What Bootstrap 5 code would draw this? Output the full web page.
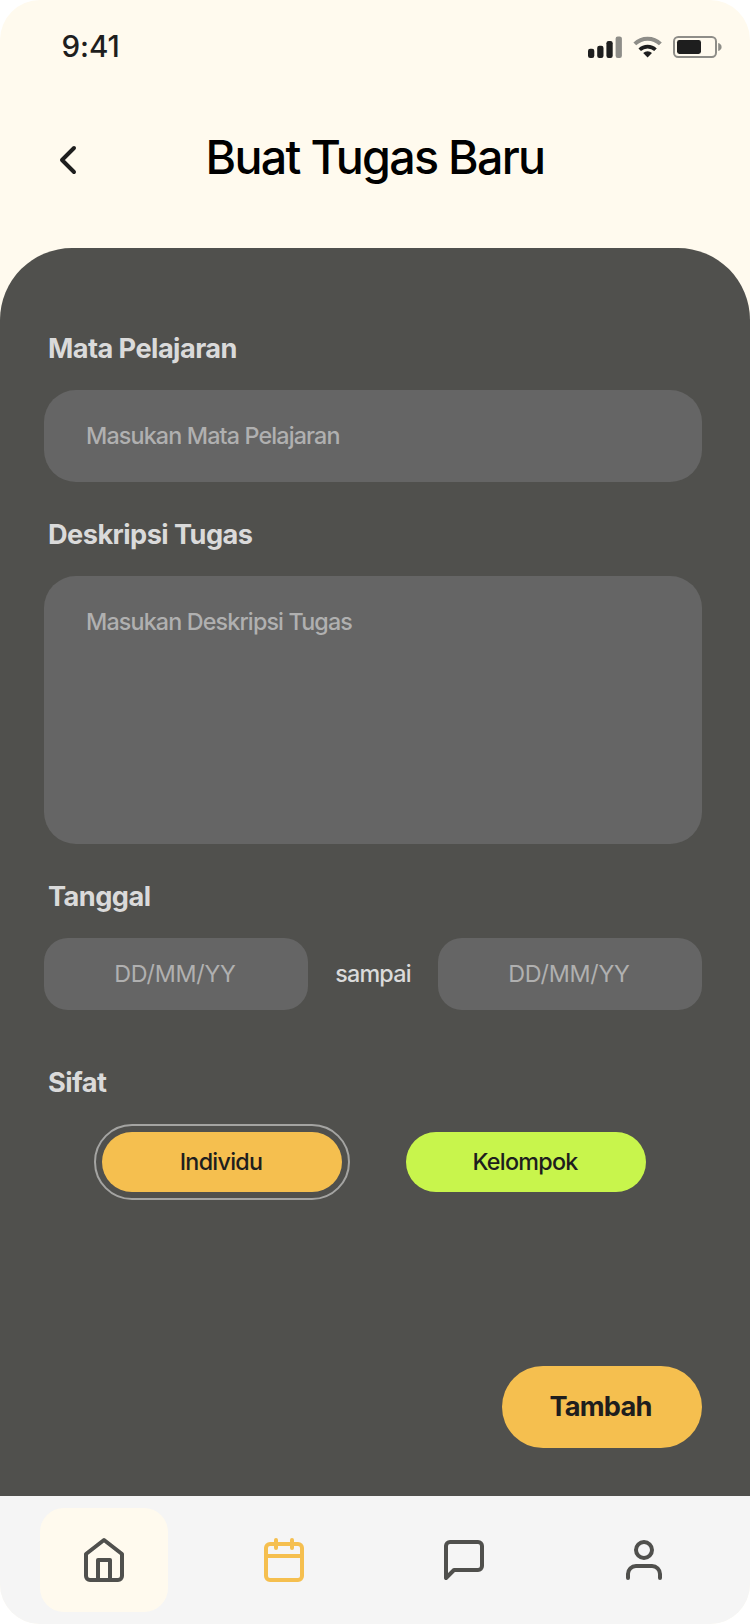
<!DOCTYPE html>
<html lang="id">
<head>
<meta charset="utf-8">
<meta name="viewport" content="width=device-width, initial-scale=1">
<title>Buat Tugas Baru</title>
<link href="https://cdn.jsdelivr.net/npm/bootstrap@5.3.0/dist/css/bootstrap.min.css" rel="stylesheet">
<style>
  :root { --cream: #fffaee; --slate: #50504d; --field: #656565; --amber: #f5bf4f; --lime: #c8f54c; --ink: #1e1e1e; --soft: #dadada; --hint: #b0b0b0; }
  body { margin: 0; background: #fff; font-family: Inter, "Liberation Sans", sans-serif; }
  .phone { width: 750px; height: 1624px; border-radius: 40px; background: var(--cream); }
  .status-bar { height: 92px; padding: 0 29px 0 61.5px; color: var(--ink); }
  .clock { font-size: 29.6px; font-weight: 500; line-height: 92px; letter-spacing: -.1px; }
  .top-bar { height: 156px; padding: 44px 44px 64px; }
  .title-text { font-size: 46.6px; font-weight: 500; line-height: 43px; letter-spacing: -1.7px; color: #000; }
  .side-slot { width: 48px; height: 48px; color: var(--ink); }
  .sheet { background: var(--slate); border-radius: 72px 72px 0 0; padding: 84px 48px 48px 44px; }
  .field-label { font-size: 27.2px; font-weight: 700; line-height: 34px; letter-spacing: -.56px; color: var(--soft); margin: 0 0 24px 4px; }
  .field { background: var(--field); border: 0; border-radius: 32px; color: var(--soft); font-size: 23.3px; font-weight: 500; line-height: 28px; letter-spacing: -.85px; padding: 32px 42px; resize: none; }
  .field:focus { background: var(--field); color: var(--soft); }
  .field::placeholder { color: var(--hint); opacity: 1; }
  .field-line { height: 92px; margin-bottom: 36px; padding-top: 31px; padding-bottom: 33px; }
  .field-area { height: 268px; margin-bottom: 36px; }
  .field-date { width: 264px; height: 72px; border-radius: 24px; padding: 21px 2px 23px 0; font-weight: 400; letter-spacing: -.22px; }
  .date-row { margin-bottom: 56px; }
  .between { font-size: 23.3px; font-weight: 500; letter-spacing: -.75px; color: var(--soft); }
  .kinds { padding: 0 48px 0 50px; }
  .ring { border: 2px solid transparent; border-radius: 38px; padding: 6px; }
  .ring.chosen { border-color: #a4a4a2; }
  .pill { width: 240px; height: 60px; padding: 0 2px 0 0; border: 0; border-radius: 30px; font-size: 23.3px; font-weight: 500; letter-spacing: -.72px; color: var(--ink); }
  .pill-amber { background: var(--amber); }
  .pill-lime { background: var(--lime); }
  .submit { width: 200px; height: 82px; padding: 0 3px 0 0; border: 0; border-radius: 41px; background: var(--amber); color: var(--ink); font-size: 27.2px; font-weight: 700; letter-spacing: -.8px; }
  .tab-bar { height: 128px; padding: 12px 42px 12px 40px; background: #f5f5f5; }
  .tab { width: 128px; height: 104px; border-radius: 24px; color: var(--slate); }
  .tab-on { background: var(--cream); }
  .tab-amber { color: var(--amber); }
  .line-icon { width: 48px; height: 48px; fill: none; stroke: currentColor; stroke-width: 2; stroke-linecap: round; stroke-linejoin: round; display: block; }
</style>
</head>
<body>
<div class="phone d-flex flex-column overflow-hidden">
  <div class="status-bar d-flex justify-content-between">
    <span class="clock">9:41</span>
    <svg width="134" height="92" viewBox="587 0 134 92" aria-hidden="true" overflow="visible">
      <g fill="#1e1e1e">
        <rect x="588" y="48.7" width="6.3" height="9.3" rx="2.2"/>
        <rect x="597.2" y="45.7" width="6.3" height="12.3" rx="2.2"/>
        <rect x="606.4" y="41" width="6.3" height="17" rx="2.2"/>
        <rect x="615.6" y="36.5" width="6.3" height="21.5" rx="2.2" fill="#8e8d88"/>
      </g>
      <path d="M634.8 43.9a18.2 18.2 0 0 1 25.6 0" fill="none" stroke="#8e8d88" stroke-width="4"/>
      <path d="M639.7 49.8a11.3 11.3 0 0 1 15.8 0" fill="none" stroke="#1e1e1e" stroke-width="3.6"/>
      <path d="M647.6 57.6l-4.400-4.600a6.600 6.600 0 0 1 8.800 0z" fill="#1e1e1e"/>
      <rect x="674" y="37" width="42" height="20" rx="4.2" fill="none" stroke="#8e8d88" stroke-width="2"/>
      <rect x="677" y="40" width="24" height="14" rx="2.4" fill="#1e1e1e"/>
      <path d="M718.2 43c2 .6 3.400 2 3.400 4s-1.400 3.400-3.400 4z" fill="#8e8d88"/>
    </svg>
  </div>
  <header class="top-bar d-flex justify-content-between">
    <a href="#" class="side-slot" aria-label="Kembali"><svg class="line-icon" viewBox="0 0 24 24"><path d="M15 18l-6-6 6-6"/></svg></a>
    <h1 class="title-text m-0">Buat Tugas Baru</h1>
    <span class="side-slot"></span>
  </header>
  <form class="sheet flex-grow-1 d-flex flex-column">
    <label class="field-label" for="subject">Mata Pelajaran</label>
    <input id="subject" class="form-control field field-line" placeholder="Masukan Mata Pelajaran">
    <label class="field-label" for="detail">Deskripsi Tugas</label>
    <textarea id="detail" class="form-control field field-area" placeholder="Masukan Deskripsi Tugas"></textarea>
    <label class="field-label" for="from">Tanggal</label>
    <div class="date-row d-flex align-items-center justify-content-between">
      <input id="from" class="form-control field field-date text-center" placeholder="DD/MM/YY">
      <span class="between">sampai</span>
      <input class="form-control field field-date text-center" placeholder="DD/MM/YY">
    </div>
    <div class="field-label">Sifat</div>
    <div class="kinds d-flex justify-content-between">
      <div class="ring chosen"><button type="button" class="btn pill pill-amber d-block">Individu</button></div>
      <div class="ring"><button type="button" class="btn pill pill-lime d-block">Kelompok</button></div>
    </div>
    <button type="button" class="btn submit align-self-end mt-auto">Tambah</button>
  </form>
  <nav class="tab-bar d-flex justify-content-between">
    <a href="#" class="tab tab-on d-flex align-items-center justify-content-center" aria-label="Beranda"><svg class="line-icon" viewBox="0 0 24 24"><path d="M3 9l9-7 9 7v11a2 2 0 0 1-2 2H5a2 2 0 0 1-2-2z"/><path d="M9 22V12h6v10"/></svg></a>
    <a href="#" class="tab tab-amber d-flex align-items-center justify-content-center" aria-label="Kalender"><svg class="line-icon" viewBox="0 0 24 24"><rect x="3" y="4" width="18" height="18" rx="2"/><path d="M16 2v4M8 2v4M3 10h18"/></svg></a>
    <a href="#" class="tab d-flex align-items-center justify-content-center" aria-label="Pesan"><svg class="line-icon" viewBox="0 0 24 24"><path d="M21 15a2 2 0 0 1-2 2H7l-4 4V5a2 2 0 0 1 2-2h14a2 2 0 0 1 2 2z"/></svg></a>
    <a href="#" class="tab d-flex align-items-center justify-content-center" aria-label="Profil"><svg class="line-icon" viewBox="0 0 24 24"><path d="M20 21v-2a4 4 0 0 0-4-4H8a4 4 0 0 0-4 4v2"/><circle cx="12" cy="7" r="4"/></svg></a>
  </nav>
</div>
<script src="https://cdn.jsdelivr.net/npm/bootstrap@5.3.0/dist/js/bootstrap.bundle.min.js"></script>
</body>
</html>
